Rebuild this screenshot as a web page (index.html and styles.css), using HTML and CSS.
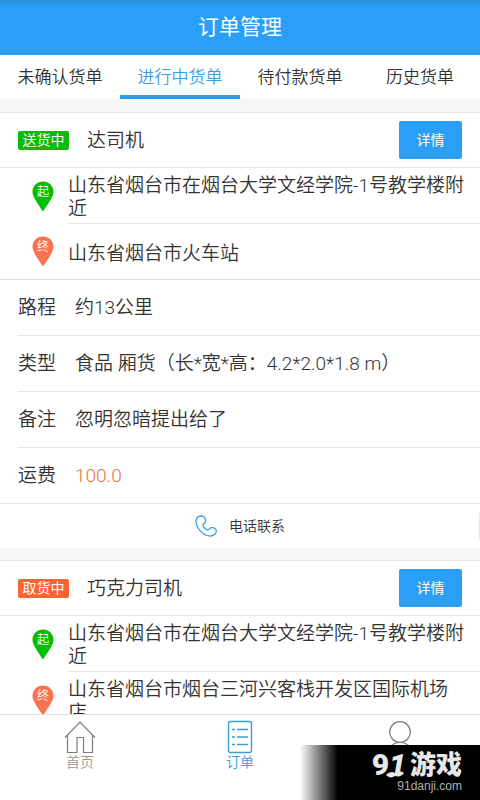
FILE: index.html
```html
<!DOCTYPE html>
<html lang="zh-CN">
<head>
<meta charset="utf-8">
<meta name="viewport" content="width=device-width, initial-scale=1">
<title>订单管理</title>
<link rel="stylesheet" href="styles.css">
</head>
<body>
<svg class="defs" aria-hidden="true">
  <symbol id="pin" viewBox="0 0 22 31"><path d="M11 .5C5 .5.5 5 .5 10.800c0 5.200 5.500 12.200 10.500 19.700 5-7.500 10.500-14.500 10.500-19.700C21.500 5 17 .5 11 .5z"/></symbol>
</svg>
<header class="title-bar"><h1>订单管理</h1></header>
<nav class="tabs" aria-label="货单状态">
  <a href="#unconfirmed">未确认货单</a>
  <a href="#active" class="active" aria-current="page">进行中货单</a>
  <a href="#unpaid">待付款货单</a>
  <a href="#history">历史货单</a>
</nav>
<main class="orders">
  <article class="order">
    <div class="order-head">
      <span class="badge delivering">送货中</span>
      <h2>达司机</h2>
      <button type="button">详情</button>
    </div>
    <div class="route">
      <span class="pin start"><svg aria-hidden="true"><use href="#pin"/></svg><span>起</span></span>
      <p>山东省烟台市在烟台大学文经学院-1号教学楼附近</p>
    </div>
    <div class="route">
      <span class="pin end"><svg aria-hidden="true"><use href="#pin"/></svg><span>终</span></span>
      <p>山东省烟台市火车站</p>
    </div>
    <dl class="details">
      <div><dt>路程</dt><dd>约13公里</dd></div>
      <div><dt>类型</dt><dd>食品 厢货（长*宽*高：4.2*2.0*1.8 m）</dd></div>
      <div><dt>备注</dt><dd>忽明忽暗提出给了</dd></div>
      <div><dt>运费</dt><dd class="price">100.0</dd></div>
    </dl>
    <a class="contact" href="#call">
      <svg viewBox="0 0 22 22" aria-hidden="true"><path d="M5.500 1C8.500 1 10.600 3 10.600 5.500c0 1.600-.8 2.700-2 3.400-1 .7-1 1.500-.4 2.500 1 1.500 2 2.500 3.400 3.300 1 .6 1.800.4 2.500-.5 1-1.300 2.200-1.800 3.600-1.500 2 .4 3.600 1.500 3.600 3.500 0 2.600-2.600 4.800-5.800 4.800C8.800 21 1 13.500 1 6.200 1 3.200 2.800 1 5.500 1z"/></svg>
      <span>电话联系</span>
    </a>
  </article>
  <article class="order">
    <div class="order-head">
      <span class="badge picking">取货中</span>
      <h2>巧克力司机</h2>
      <button type="button">详情</button>
    </div>
    <div class="route">
      <span class="pin start"><svg aria-hidden="true"><use href="#pin"/></svg><span>起</span></span>
      <p>山东省烟台市在烟台大学文经学院-1号教学楼附近</p>
    </div>
    <div class="route">
      <span class="pin end"><svg aria-hidden="true"><use href="#pin"/></svg><span>终</span></span>
      <p>山东省烟台市烟台三河兴客栈开发区国际机场店</p>
    </div>
  </article>
</main>
<nav class="bottom-nav" aria-label="主导航">
  <a href="#home">
    <svg viewBox="0 0 32 34" aria-hidden="true"><path d="M1 17.500 16 2l15 15.500M3.500 15v17.500h9.500V17.500h6.500v15h9V15"/></svg>
    <span>首页</span>
  </a>
  <a href="#orders" class="active" aria-current="page">
    <svg viewBox="0 0 32 34" aria-hidden="true"><rect x="4.500" y="1.500" width="23" height="31" rx="2"/><path d="M8 9.500h3m2 0h11M8 17h3m2 0h11M8 24.500h3m2 0h11"/></svg>
    <span>订单</span>
  </a>
  <a href="#me" aria-label="我的">
    <svg viewBox="0 0 32 34" aria-hidden="true"><circle cx="16" cy="12" r="10.300"/><path d="M4 31c1-5 6-8.500 12-8.500s11 3.500 12 8.500"/></svg>
  </a>
</nav>
<aside class="watermark">
  <div class="brand">
    <span class="number">9<i>1</i></span>
    <span>游戏</span>
    <svg viewBox="0 0 18 8" aria-hidden="true"><path d="M0 5C3 2 6 1 9 3c3-2 7-2 9 0-2 3-5 4-9 3-3 2-6 2-9-1z"/></svg>
  </div>
  <div class="site">91danji.com</div>
</aside>
</body>
</html>
```
FILE: styles.css
```css
* { box-sizing: border-box; }
body {
  margin: 0;
  height: 100vh;
  display: flex;
  flex-direction: column;
  overflow: hidden;
  background: #fff;
  color: #333;
  font-family: Roboto, "Noto Sans CJK SC", sans-serif;
  font-weight: 350;
  font-size: 19px;
  line-height: 23px;
}
h1, h2, p, dl, dd { margin: 0; font-size: inherit; font-weight: inherit; }
a { color: inherit; text-decoration: none; }
.defs { display: none; }

.title-bar {
  flex: none;
  height: 55px;
  display: flex;
  align-items: center;
  justify-content: center;
  background: linear-gradient(#2490df, #2b9ff8 8px);
  color: #fff;
}
.title-bar h1 { font-size: 21px; font-weight: 400; }

.tabs {
  flex: none;
  display: grid;
  grid-template-columns: repeat(4, 1fr);
  height: 44px;
  font-size: 17px;
}
.tabs a {
  display: flex;
  align-items: center;
  justify-content: center;
  border-bottom: 4px solid transparent;
  padding-top: 4px;
}
.tabs .active { color: #3b9edb; border-color: #2b9cea; }

.orders { flex: 1; min-height: 0; overflow: hidden; background: #f7f7f7; }
.order { margin-top: 13px; border-top: 1px solid #e8e8e8; background: #fff; }
.order + .order { margin-top: 12px; }
.order-head {
  display: flex;
  align-items: center;
  height: 55px;
  padding: 0 18px;
  border-bottom: 1px solid #e6e6e6;
}
.badge {
  width: 51px;
  border-radius: 2px;
  color: #fff;
  font-size: 14px;
  font-weight: 400;
  line-height: 19px;
  text-align: center;
}
.delivering { background: #0fb80b; }
.picking { background: #fb6430; }
.order-head h2 { flex: 1; padding-left: 18px; }
.order-head button {
  width: 63px;
  height: 38px;
  border: 0;
  border-radius: 2px;
  background: #2b9ff8;
  color: #fff;
  font: inherit;
  font-size: 14px;
  font-weight: 400;
}

.route { display: flex; height: 56px; padding-left: 32px; }
.route p {
  flex: 1;
  display: flex;
  align-items: center;
  margin-left: 14px;
  padding: 3px 15px 0 0;
  border-bottom: 1px solid #e6e6e6;
}
.route:has(+ .details) { border-bottom: 1px solid #e0e0e0; }
.route:has(+ .details) p { border-bottom: 0; }
.pin {
  display: grid;
  justify-items: center;
  align-self: center;
  color: #fff;
  font-size: 12px;
  line-height: 22px;
}
.pin > * { grid-area: 1 / 1; }
.pin svg { width: 22px; height: 31px; }
.start { fill: #05bd05; }
.end { fill: #fb7250; }

.details { padding-left: 18px; }
.details div {
  display: flex;
  align-items: center;
  height: 56px;
  border-bottom: 1px solid #e6e6e6;
}
.details div:last-child { margin-left: -18px; padding-left: 18px; }
.details dt { width: 57px; }
.price { color: #f0713f; }

.contact {
  position: relative;
  display: flex;
  align-items: center;
  justify-content: center;
  gap: 12px;
  height: 44px;
  font-size: 14px;
}
.contact svg { width: 22px; height: 22px; fill: none; stroke: #3b9edb; stroke-width: 1.3; }
.contact::after {
  content: "";
  position: absolute;
  right: 0;
  width: 1px;
  height: 26px;
  background: #e6e6e6;
}

.bottom-nav {
  flex: none;
  display: grid;
  grid-template-columns: repeat(3, 1fr);
  height: 86px;
  padding-top: 5px;
  border-top: 1px solid #e0e0e0;
  color: #999;
  font-size: 14px;
  line-height: 16px;
}
.bottom-nav a { display: flex; flex-direction: column; align-items: center; }
.bottom-nav svg { width: 32px; height: 34px; fill: none; stroke: #7d7d7d; stroke-width: 1.2; }
.bottom-nav .active { color: #3b9edb; }
.bottom-nav .active svg { stroke: #3b9edb; stroke-width: 1.4; }

.watermark {
  position: absolute;
  right: 0;
  bottom: 0;
  width: 180px;
  height: 55px;
  padding: 6px 18px 0 0;
  display: flex;
  flex-direction: column;
  align-items: flex-end;
  background: linear-gradient(90deg, transparent, #000 38px);
}
.brand {
  position: relative;
  display: flex;
  gap: 4px;
  color: #e8e8e8;
  font-size: 26px;
  font-weight: 900;
  line-height: 28px;
}
.number { font-size: 30px; }
.brand svg { position: absolute; left: 14px; bottom: 1px; width: 18px; height: 8px; fill: #e8e8e8; }
.site { color: #b0b0b0; font: 12px/15px "Liberation Sans", sans-serif; }
```
